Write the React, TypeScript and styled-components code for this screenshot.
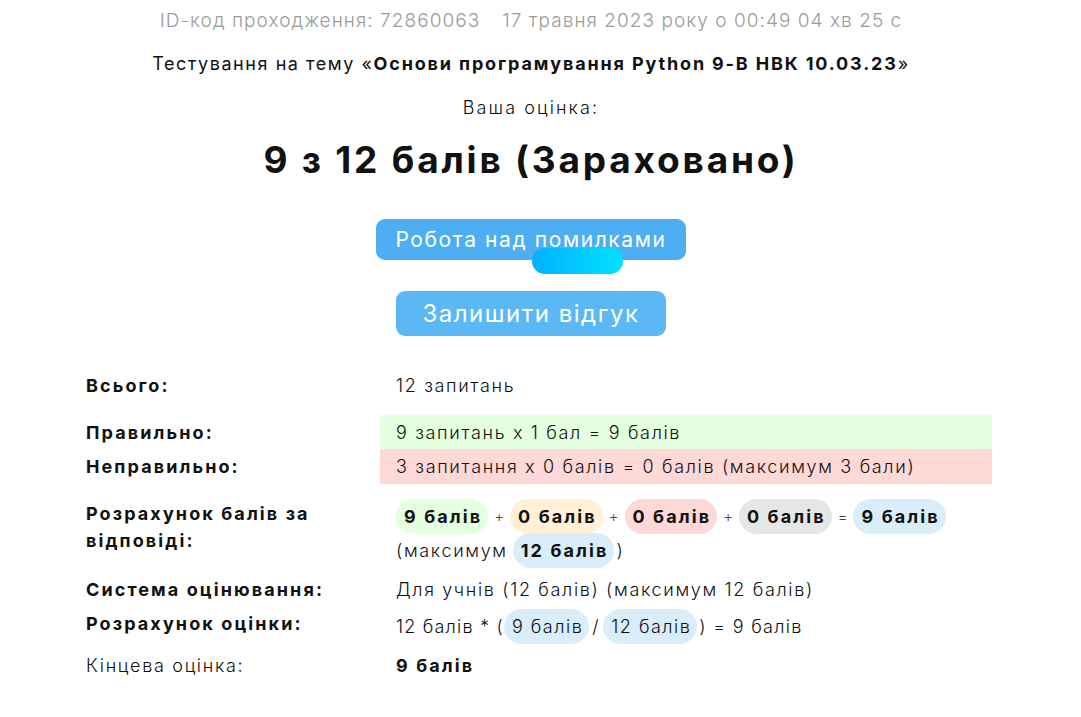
import React from "react";
import styled, { createGlobalStyle } from "styled-components";

const Global = createGlobalStyle`
  html, body { margin: 0; padding: 0; background: #fff; }
  body { font-family: Inter, "Noto Sans", "Liberation Sans", sans-serif; color: #111; }
`;

const Page = styled.div`
  width: 1062px;
  display: flex;
  flex-direction: column;
  align-items: center;
`;

const Meta = styled.div`
  margin-top: 8px;
  height: 26px;
  line-height: 26px;
  font-size: 19px;
  font-weight: 300;
  letter-spacing: 1.05px;
  color: #9b9b9b;
  display: flex;
  gap: 22px;
`;

const Topic = styled.div`
  margin-top: 17px;
  line-height: 26px;
  font-size: 18px;
  font-weight: 400;
  letter-spacing: 1.55px;
  b { font-weight: 700; letter-spacing: 1.85px; }
`;

const ScoreLabel = styled.div`
  margin-top: 18px;
  line-height: 26px;
  font-size: 18px;
  font-weight: 300;
  letter-spacing: 2.1px;
`;

const Score = styled.h1`
  margin: 17px 0 0;
  line-height: 44px;
  font-size: 37px;
  font-weight: 700;
  letter-spacing: 2.8px;
`;

const ButtonWrap = styled.div`
  position: relative;
  margin-top: 37px;
`;

const Button = styled.button<{ $w: number; $h: number; $fs: number; $ls: number; $bg: string }>`
  display: flex;
  align-items: center;
  justify-content: center;
  width: ${(p) => p.$w}px;
  height: ${(p) => p.$h}px;
  border: none;
  border-radius: 9px;
  background: ${(p) => p.$bg};
  color: #fff;
  font-family: inherit;
  font-size: ${(p) => p.$fs}px;
  letter-spacing: ${(p) => p.$ls}px;
  font-weight: 400;
  padding: 0;
`;

const Loader = styled.div`
  position: absolute;
  left: 156px;
  top: 29px;
  width: 91px;
  height: 26px;
  border-radius: 13px;
  background: linear-gradient(90deg, #00b0ff 0%, #00e2ff 100%);
`;

const Spacer = styled.div<{ $h: number }>`
  height: ${(p) => p.$h}px;
`;

const Table = styled.div`
  align-self: flex-start;
  width: 922px;
  margin-left: 70px;
  margin-top: 32px;
  display: flex;
  flex-direction: column;
`;

const Row = styled.div<{ $mt?: number; $h?: number }>`
  display: grid;
  grid-template-columns: 310px 612px;
  margin-top: ${(p) => p.$mt ?? 0}px;
  min-height: ${(p) => p.$h ?? 34}px;
  font-size: 18px;
`;

const Label = styled.div<{ $light?: boolean }>`
  padding-left: 16px;
  font-weight: ${(p) => (p.$light ? 300 : 700)};
  letter-spacing: ${(p) => (p.$light ? 1.7 : 2.1)}px;
  line-height: 27px;
  display: flex;
  align-items: center;
`;

const LabelTop = styled(Label)`
  align-items: flex-start;
  padding-top: 4px;
`;

const Value = styled.div<{ $bg?: string; $bold?: boolean }>`
  background: ${(p) => p.$bg ?? "transparent"};
  padding-left: 16px;
  font-weight: ${(p) => (p.$bold ? 700 : 300)};
  letter-spacing: ${(p) => (p.$bold ? 2.1 : 1.65)}px;
  display: flex;
  align-items: center;
`;

const Calc = styled.div`
  padding: 3px 0 2px 16px;
  font-weight: 300;
  letter-spacing: 1.65px;
  display: flex;
  flex-wrap: wrap;
  align-items: center;
  row-gap: 0;
`;

const Pill = styled.span<{ $bg: string; $bold?: boolean }>`
  display: inline-flex;
  align-items: center;
  background: ${(p) => p.$bg};
  border-radius: 18px;
  padding: 0 6px 0 8px;
  height: 35px;
  margin: -0.5px 0;
  font-weight: ${(p) => (p.$bold ? 700 : 300)};
  letter-spacing: ${(p) => (p.$bold ? 2.1 : 1.5)}px;
`;

const Op = styled.span`
  display: inline-block;
  margin: 0 6px;
  font-size: 15px;
  letter-spacing: 0;
  color: #444;
`;

const Text = styled.span<{ $ml?: number; $mr?: number; $ls?: number }>`
  margin-left: ${(p) => p.$ml ?? 0}px;
  margin-right: ${(p) => p.$mr ?? 0}px;
  letter-spacing: ${(p) => p.$ls ?? 1.65}px;
  white-space: pre;
`;

const Break = styled.div`
  flex-basis: 100%;
  height: 0;
`;

export default function App() {
  return (
    <>
      <Global />
      <Page>
        <Meta>
          <span>ID-код проходження: 72860063</span>
          <span>17 травня 2023 року о 00:49 04 хв 25 с</span>
        </Meta>
        <Topic>
          Тестування на тему «<b>Основи програмування Python 9-В НВК 10.03.23</b>»
        </Topic>
        <ScoreLabel>Ваша оцінка:</ScoreLabel>
        <Score>9 з 12 балів (Зараховано)</Score>
        <ButtonWrap>
          <Button $w={310} $h={41} $fs={21} $ls={1.6} $bg="#4daff2">Робота над помилками</Button>
          <Loader />
        </ButtonWrap>
        <Spacer $h={31} />
        <Button $w={270} $h={45} $fs={24} $ls={1.5} $bg="#5bb8f5">Залишити відгук</Button>
        <Table>
          <Row>
            <Label>Всього:</Label>
            <Value>12 запитань</Value>
          </Row>
          <Row $mt={13}>
            <Label>Правильно:</Label>
            <Value $bg="#e5ffe1">9 запитань х 1 бал = 9 балів</Value>
          </Row>
          <Row $h={35}>
            <Label>Неправильно:</Label>
            <Value $bg="#ffd8d8">3 запитання х 0 балів = 0 балів (максимум 3 бали)</Value>
          </Row>
          <Row $mt={12}>
            <LabelTop>Розрахунок балів за<br />відповіді:</LabelTop>
            <Calc>
              <Pill $bg="#e5ffe1" $bold>9 балів</Pill>
              <Op>+</Op>
              <Pill $bg="#fff0d6" $bold>0 балів</Pill>
              <Op>+</Op>
              <Pill $bg="#ffd8d8" $bold>0 балів</Pill>
              <Op>+</Op>
              <Pill $bg="#e6e6e6" $bold>0 балів</Pill>
              <Op>=</Op>
              <Pill $bg="#d9edfb" $bold>9 балів</Pill>
              <Break />
              <Text $mr={5}>(максимум</Text>
              <Pill $bg="#d9edfb" $bold>12 балів</Pill>
              <Text $ml={2}>)</Text>
            </Calc>
          </Row>
          <Row $mt={3}>
            <Label>Система оцінювання:</Label>
            <Value>Для учнів (12 балів) (максимум 12 балів)</Value>
          </Row>
          <Row>
            <LabelTop>Розрахунок оцінки:</LabelTop>
            <Calc>
              <Text $ls={1.2}>12 балів * (</Text>
              <Pill $bg="#d9edfb">9 балів</Pill>
              <Text $ml={3} $mr={3}>/</Text>
              <Pill $bg="#d9edfb">12 балів</Pill>
              <Text $ml={2} $ls={1.3}>) = 9 балів</Text>
            </Calc>
          </Row>
          <Row $mt={3}>
            <Label $light>Кінцева оцінка:</Label>
            <Value $bold>9 балів</Value>
          </Row>
        </Table>
      </Page>
    </>
  );
}
